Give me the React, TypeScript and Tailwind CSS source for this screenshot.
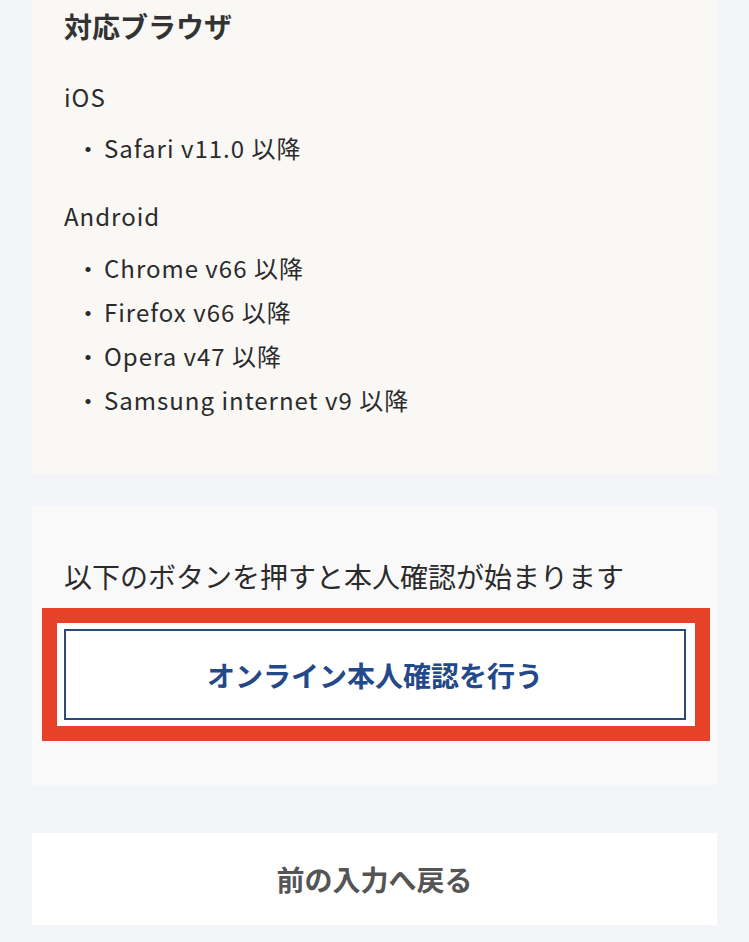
import React from "react";

const font = { fontFamily: '"Noto Sans CJK JP", "Noto Sans", sans-serif' };

const items = [
  "Chrome v66 以降",
  "Firefox v66 以降",
  "Opera v47 以降",
  "Samsung internet v9 以降",
];

function Item({ text }: { text: string }) {
  return (
    <li className="flex items-center h-[44px] pl-[14px] text-[24px] leading-[44px] text-[#2b2b2b]">
      <span className="w-[20px] flex justify-center text-[#2b2b2b]">・</span>
      <span className="ml-[6px] tracking-[1px]">{text}</span>
    </li>
  );
}

export default function App() {
  return (
    <div
      className="min-h-[942px] w-[749px] bg-[#f4f5f9] px-[32px] pb-[17px]"
      style={font}
    >
      <section className="bg-[#f9f8f5] px-[32px] pt-[6px] pb-[52px]">
        <h2 className="text-[28px] leading-[40px] font-bold text-[#333333]">
          対応ブラウザ
        </h2>
        <p className="mt-[33px] text-[24px] leading-[36px] tracking-[1px] text-[#2b2b2b]">iOS</p>
        <ul className="mt-[11px]">
          <Item text="Safari v11.0 以降" />
        </ul>
        <p className="mt-[28px] text-[24px] leading-[36px] tracking-[1px] text-[#2b2b2b]">Android</p>
        <ul className="mt-[12px]">
          {items.map((t) => (
            <Item key={t} text={t} />
          ))}
        </ul>
      </section>

      <section className="mt-[33px] bg-[#f9f9fa] pt-[49px] pb-[44px]">
        <p className="px-[32px] text-[28px] leading-[40px] text-[#2b2b2b]">
          以下のボタンを押すと本人確認が始まります
        </p>
        <div className="mt-[12px] ml-[10px] mr-[7px] border-[15px] border-[#e8412a] bg-white pl-[7px] pr-[9px] py-[6px]">
          <button className="w-full h-[91px] border-2 border-[#2c4a78] bg-white flex items-center justify-center text-[28px] font-bold text-[#23498a]">
            オンライン本人確認を行う
          </button>
        </div>
      </section>

      <section className="mt-[48px] bg-white h-[92px] flex items-center justify-center">
        <span className="text-[28px] font-bold text-[#555555]">前の入力へ戻る</span>
      </section>
    </div>
  );
}
